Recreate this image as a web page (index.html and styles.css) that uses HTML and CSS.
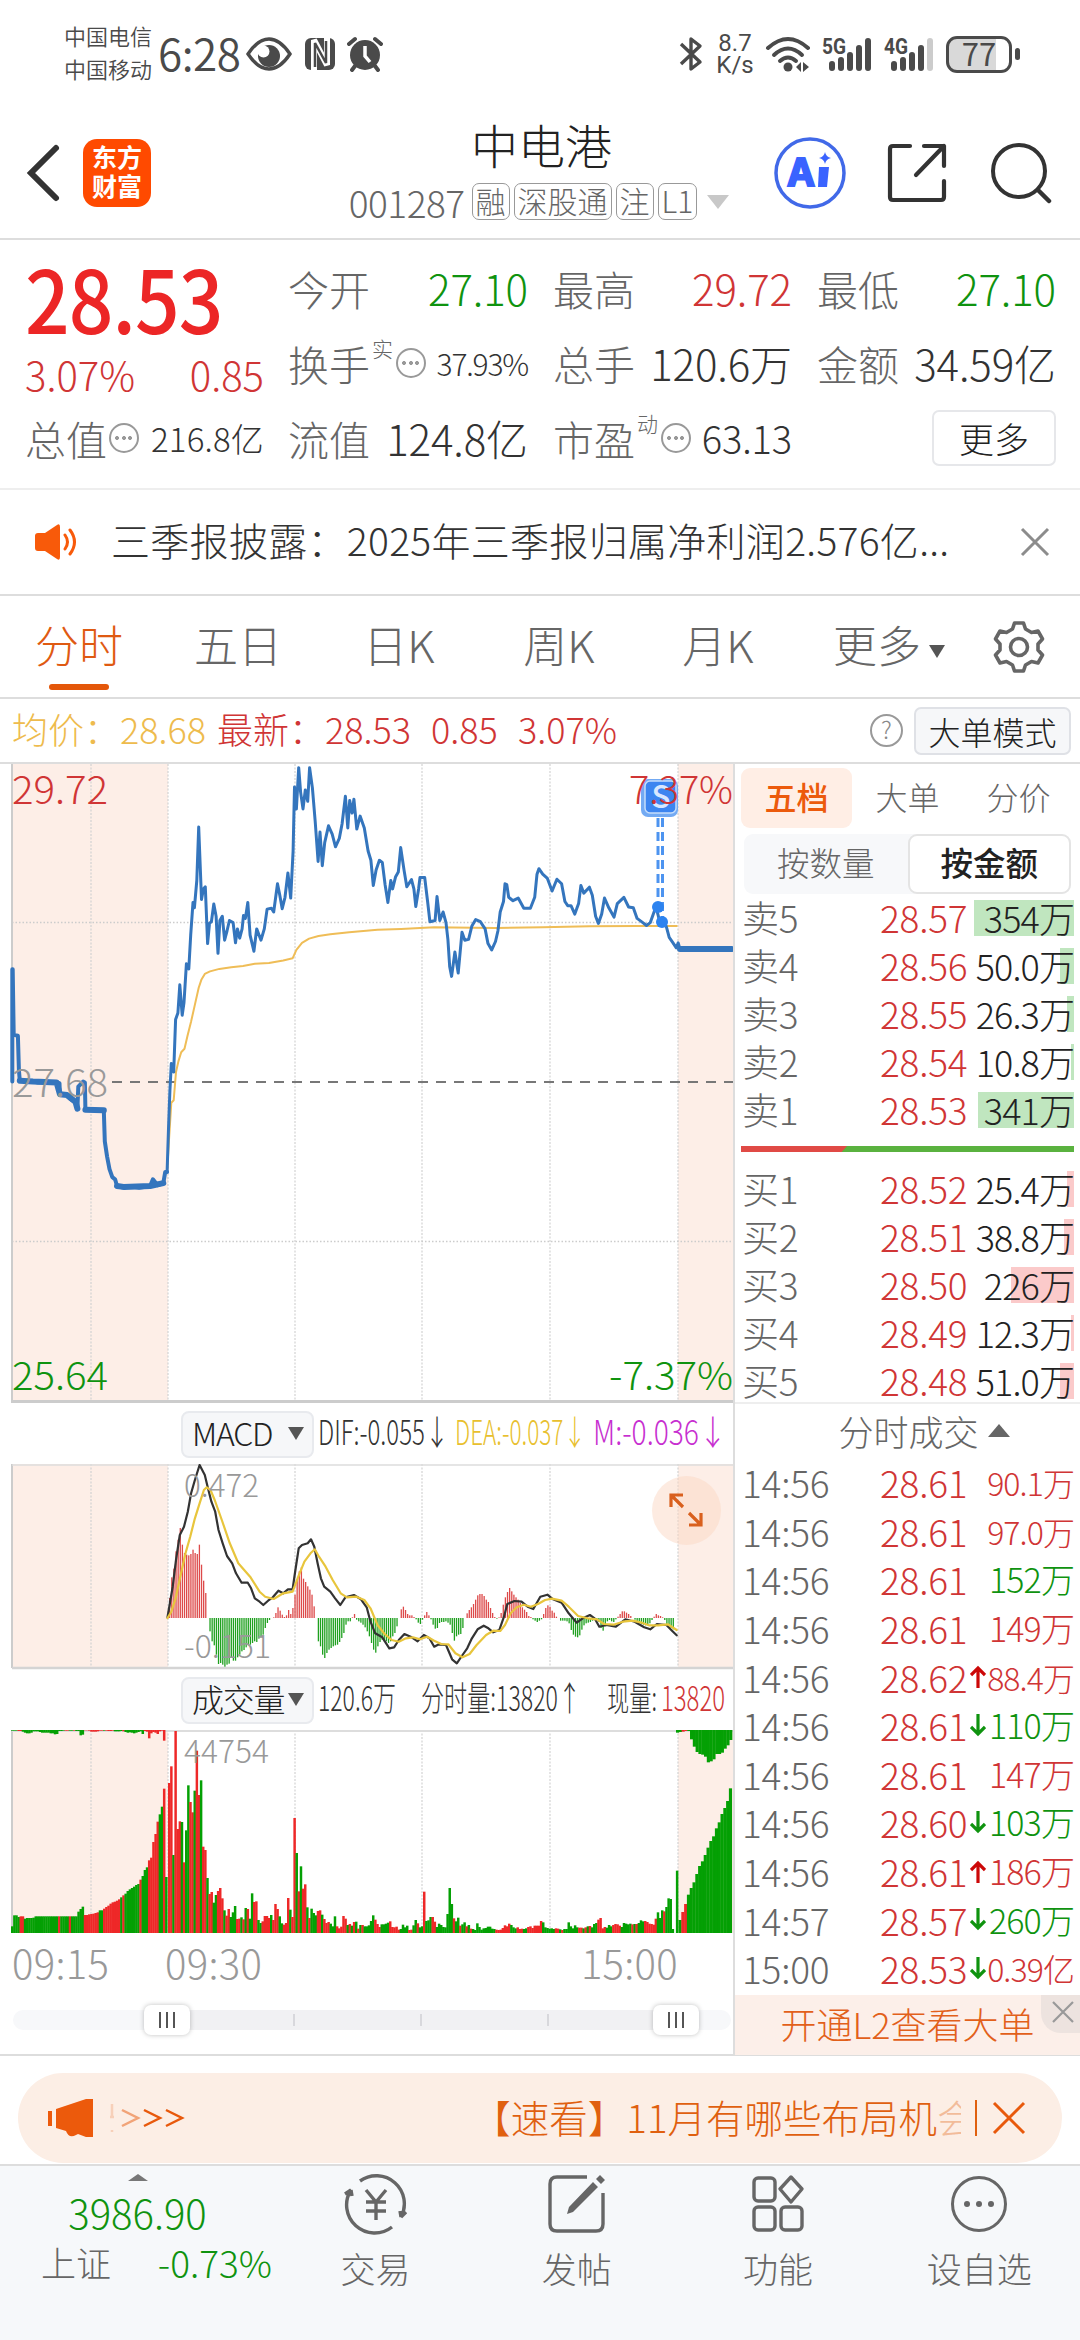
FILE: index.html
```
<!DOCTYPE html>
<html lang="zh-CN">
<head>
    <meta charset="UTF-8">
    <meta name="viewport" content="width=device-width, initial-scale=1.0">
    <title>中电港 001287</title>
    <link rel="stylesheet" href="styles.css">
</head>
<body>
    <div class="status-bar">
        <div class="carrier"><span>中国电信</span><span>中国移动</span></div>
        <span class="clock">6:28</span>
        <svg class="eye" width="46" height="34" viewBox="0 0 46 34"><path d="M2 17Q12 2 23 2T44 17Q34 32 23 32T2 17Z" fill="none" stroke="#4a4a4a" stroke-width="3.4"/><circle cx="23" cy="19" r="11" fill="#4a4a4a"/><circle cx="17.500" cy="14.500" r="6" fill="#fff"/></svg>
        <svg class="nfc" width="32" height="34" viewBox="0 0 32 34"><rect x="1" y="1" width="30" height="32" rx="6" fill="#4a4a4a"/><path d="M10 33V3l13 25V1" fill="none" stroke="#fff" stroke-width="6"/><path d="M11 30V6l11 20V4" fill="none" stroke="#4a4a4a" stroke-width="2.500"/></svg>
        <svg class="alarm" width="36" height="36" viewBox="0 0 36 36"><circle cx="18" cy="19" r="15" fill="#4a4a4a"/><path d="M2 8l6-5M34 8l-6-5M8 30l-3 4M28 30l3 4" stroke="#4a4a4a" stroke-width="4" stroke-linecap="round"/><path d="M18 10v10l5 6" stroke="#fff" stroke-width="3.500" fill="none"/></svg>
        <div class="status-right">
            <svg width="24" height="36" viewBox="0 0 24 36"><path d="M2 8l19 18-9 7V3l9 7L2 28" fill="none" stroke="#4a4a4a" stroke-width="3.400" stroke-linejoin="round"/></svg>
            <div class="speed"><span>8.7</span><span>K/s</span></div>
            <svg width="46" height="36" viewBox="0 0 46 36"><g fill="none" stroke="#4a4a4a" stroke-width="4" stroke-linecap="round"><path d="M3 12Q23-6 43 12"/><path d="M9 19Q23 6 37 19"/><path d="M15 25Q23 18 31 25"/></g><circle cx="23" cy="31" r="4.500" fill="#4a4a4a"/><path d="M31 31l5-5v10ZM38 26l6 5-6 5Z" fill="#4a4a4a"/></svg>
            <svg class="signal" width="52" height="36" viewBox="0 0 52 36"><text x="1" y="18" textLength="24" lengthAdjust="spacingAndGlyphs">5G</text><path d="M11 28v4M20 24v8M29 19v13M38 12v20M47 5v27"/></svg>
            <svg class="signal" width="52" height="36" viewBox="0 0 52 36"><text x="1" y="18" textLength="24" lengthAdjust="spacingAndGlyphs">4G</text><path d="M11 28v4M20 24v8M29 19v13M38 12v20"/><path class="off" d="M47 5v27"/></svg>
            <div class="battery">77</div>
        </div>
    </div>

    <header class="header">
        <svg class="back" width="36" height="60" viewBox="0 0 36 60"><path d="M31 5L6 30l25 25" fill="none" stroke="#333" stroke-width="6" stroke-linecap="round"/></svg>
        <div class="logo">东方<br>财富</div>
        <div class="stock">
            <h1>中电港</h1>
            <div class="code-row">
                <span class="code">001287</span>
                <span class="tag">融</span><span class="tag">深股通</span><span class="tag">注</span><span class="tag">L1</span>
                <i class="caret"></i>
            </div>
        </div>
        <svg class="ai" width="74" height="74" viewBox="0 0 74 74"><circle cx="37" cy="37" r="34" fill="none" stroke="#4169e8" stroke-width="3.500"/><text x="14" y="50" textLength="28" lengthAdjust="spacingAndGlyphs">A</text><path d="M46 31h10l-2 20h-9z" fill="#3a63ff"/><path d="M52 16q1 5 6 6-5 1-6 6-1-5-6-6 5-1 6-6" fill="#3a63ff"/></svg>
        <svg class="share" width="60" height="60" viewBox="0 0 60 60"><path d="M23 3H6q-3 0-3 3v48q0 3 3 3h48q3 0 3-3V38M37 3h20v20M57 3L29 32" fill="none" stroke="#333" stroke-width="4.200" stroke-linecap="round" stroke-linejoin="round"/></svg>
        <svg class="search" width="62" height="62" viewBox="0 0 62 62"><circle cx="29" cy="29" r="26" fill="none" stroke="#333" stroke-width="4"/><path d="M48 48l11 11" stroke="#333" stroke-width="4.500" stroke-linecap="round"/></svg>
    </header>

    <section class="quote">
        <div class="quote-main">
            <div class="price">28.53</div>
            <div class="change"><span>3.07%</span><span>0.85</span></div>
            <div class="cell small"><label>总值</label><i class="dots"></i><b>216.8亿</b></div>
        </div>
        <div class="quote-grid">
            <div class="cell"><label>今开</label><b class="green">27.10</b></div>
            <div class="cell"><label>最高</label><b class="red">29.72</b></div>
            <div class="cell"><label>最低</label><b class="green">27.10</b></div>
            <div class="cell tight"><label>换手<sup>实</sup></label><i class="dots"></i><b>37.93%</b></div>
            <div class="cell"><label>总手</label><b>120.6万</b></div>
            <div class="cell"><label>金额</label><b>34.59亿</b></div>
            <div class="cell"><label>流值</label><b>124.8亿</b></div>
            <div class="cell mid"><label>市盈<sup>动</sup></label><i class="dots"></i><b>63.13</b></div>
            <div class="cell"><button class="more">更多</button></div>
        </div>
    </section>

    <section class="news">
        <svg width="46" height="38" viewBox="0 0 46 38"><path d="M2 13q0-3 3-3h7L24 2q3-2 3 2v30q0 4-3 2l-12-8H5q-3 0-3-3z" fill="#f85a0a"/><path d="M32 12q5 7 0 14M37 7q9 12 0 24" fill="none" stroke="#f85a0a" stroke-width="3" stroke-linecap="round"/></svg>
        <p>三季报披露：2025年三季报归属净利润2.576亿...</p>
        <svg width="30" height="30" viewBox="0 0 30 30"><path d="M2 2l26 26M28 2L2 28" stroke="#8c8c8c" stroke-width="3"/></svg>
    </section>

    <nav class="tabs">
        <a class="active">分时</a><a>五日</a><a>日K</a><a>周K</a><a>月K</a><a>更多<i class="tri"></i></a>
        <svg width="52" height="54" viewBox="-26 -27 52 54"><path d="M-4.500-24h9l2 6 6 3.500 6.500-1.500 4.500 8-4.500 5v6l4.500 5-4.500 8-6.500-1.500-6 3.500-2 6h-9l-2-6-6-3.500-6.500 1.500-4.500-8 4.500-5v-6l-4.500-5 4.500-8 6.500 1.500 6-3.500z" fill="none" stroke="#666" stroke-width="3.600" stroke-linejoin="round"/><circle r="8.500" fill="none" stroke="#666" stroke-width="3.600"/></svg>
    </nav>

    <div class="summary">
        <span class="avg">均价：28.68</span>
        <span class="last">最新：28.53</span><span class="last">0.85</span><span class="last">3.07%</span>
        <i class="help">?</i>
        <button>大单模式</button>
    </div>

    <main class="board">
        <div class="charts">
            <svg id="priceChart" class="chart" width="733" height="640" viewBox="0 0 733 640"></svg>
            <div class="indicator">
                <button>MACD<i class="tri"></i></button>
                <svg width="418" height="50" viewBox="0 0 418 50">
                    <text x="4" y="36" textLength="131" lengthAdjust="spacingAndGlyphs" fill="#333">DIF:-0.055↓</text>
                    <text x="141" y="36" textLength="131" lengthAdjust="spacingAndGlyphs" fill="#e8bf2e">DEA:-0.037↓</text>
                    <text x="279" y="36" textLength="134" lengthAdjust="spacingAndGlyphs" fill="#c72fd0">M:-0.036↓</text>
                </svg>
            </div>
            <div class="panel">
                <svg id="macdChart" class="chart" width="733" height="206" viewBox="0 0 733 206"></svg>
                <div class="expand"><svg width="34" height="34" viewBox="0 0 34 34"><path d="M14 2H2v12M2 2l12 12M20 32h12V20M32 32L20 20" fill="none" stroke="#d9601e" stroke-width="3.200"/></svg></div>
            </div>
            <div class="indicator volume-head">
                <button>成交量<i class="tri"></i></button>
                <svg width="418" height="50" viewBox="0 0 418 50">
                    <text x="4" y="36" textLength="78" lengthAdjust="spacingAndGlyphs" fill="#333">120.6万</text>
                    <text x="107" y="36" textLength="160" lengthAdjust="spacingAndGlyphs" fill="#333">分时量:13820↑</text>
                    <text x="293" y="36" textLength="50" lengthAdjust="spacingAndGlyphs" fill="#333">现量:</text>
                    <text x="347" y="36" textLength="64" lengthAdjust="spacingAndGlyphs" fill="#d03535">13820</text>
                </svg>
            </div>
            <svg id="volChart" class="chart" width="733" height="205" viewBox="0 0 733 205"></svg>
            <div class="times"><span>09:15</span><span>09:30</span><span>15:00</span></div>
            <div class="slider">
                <div class="range"><i></i><i></i><i></i></div>
                <b></b><b class="end"></b>
            </div>
        </div>

        <aside class="book">
            <div class="book-tabs"><span class="active">五档</span><span>大单</span><span>分价</span></div>
            <div class="segment"><span>按数量</span><span class="active">按金额</span></div>
            <div id="asks"></div>
            <div class="ratio"><i></i></div>
            <div id="bids"></div>
            <div class="trades-title">分时成交<i></i></div>
            <div id="trades"></div>
            <div class="l2">开通L2查看大单<span><svg width="22" height="22" viewBox="0 0 22 22"><path d="M1 1l20 20M21 1L1 21" stroke="#999" stroke-width="2.200"/></svg></span></div>
        </aside>
    </main>

    <div class="promo-wrap">
        <div class="promo">
            <svg width="46" height="40" viewBox="0 0 46 40"><path d="M0 13h4v15H0zM8 11L38 1h7v38h-7l-8-3-2 1q-7 4-10-4L8 30z" fill="#ec5a0c"/></svg>
            <svg class="arrows" width="76" height="36" viewBox="0 0 76 36"><path d="M2 4v12M0 17h4M2 30v2" opacity=".2"/><path d="M12 10l16 8-16 8" opacity=".5"/><path d="M34 10l16 8-16 8M56 10l16 8-16 8"/></svg>
            <p>【速看】11月有哪些布局机<em>会</em></p>
            <i></i>
            <svg width="34" height="34" viewBox="0 0 34 34"><path d="M2 2l30 30M32 2L2 32" stroke="#e8590c" stroke-width="3"/></svg>
        </div>
    </div>

    <footer class="bottom-nav">
        <div class="index">
            <i></i>
            <b>3986.90</b>
            <div><span>上证</span><em>-0.73%</em></div>
        </div>
        <a>
            <svg width="68" height="62" viewBox="-34 -31 68 62"><path d="M-16-23A28 28 0 0 1 25 13l5-5M16 23A28 28 0 0 1-25-14l-6 4M25 13l-1-6M-25-14l1 6M-10-14L0-2-10-14M10-14L0-2V16M-10-2h20M-10 7h20" fill="none" stroke="#666" stroke-width="3.400"/></svg>
            <span>交易</span>
        </a>
        <a>
            <svg width="60" height="62" viewBox="0 0 60 62"><path d="M40 4H10q-7 0-7 7v40q0 7 7 7h39q7 0 7-7V20" fill="none" stroke="#666" stroke-width="3.400"/><path d="M46 9l5 5-25 25-6 2 2-7zM49 6l4-4 5 5-4 4z" fill="#666"/></svg>
            <span>发帖</span>
        </a>
        <a>
            <svg width="56" height="62" viewBox="0 0 56 62"><g fill="none" stroke="#666" stroke-width="3.400"><rect x="4" y="5" width="21" height="23" rx="4"/><path d="M41 4l11 12-11 13-11-13z" stroke-linejoin="round"/><rect x="4" y="34" width="21" height="23" rx="4"/><rect x="31" y="34" width="21" height="23" rx="4"/></g></svg>
            <span>功能</span>
        </a>
        <a>
            <svg width="60" height="62" viewBox="0 0 60 62"><circle cx="30" cy="31" r="26.500" fill="none" stroke="#666" stroke-width="3"/><g fill="#666"><circle cx="18" cy="31" r="3"/><circle cx="30" cy="31" r="3"/><circle cx="42" cy="31" r="3"/></g></svg>
            <span>设自选</span>
        </a>
    </footer>

    <script src="chart.js"></script>
</body>
</html>
```
FILE: styles.css
```
* {
    box-sizing: border-box;
}
body {
    margin: 0;
    width: 1080px;
    height: 2340px;
    overflow: hidden;
    background: #fff;
    color: #333;
    font-family: "Noto Sans CJK SC", "Noto Sans", sans-serif;
    font-weight: 300;
}
h1, p {
    margin: 0;
    font-weight: 300;
}
i, em {
    font-style: normal;
}
b {
    font-weight: 300;
}
button {
    font-family: inherit;
    font-weight: 300;
    color: #222;
    padding: 0;
}
svg {
    display: block;
    flex: none;
}
.red { color: #d03535; }
.green { color: #0f930f; }

/* status bar */
.status-bar {
    display: flex;
    align-items: center;
    height: 108px;
    padding-left: 64px;
    color: #4a4a4a;
}
.carrier {
    display: flex;
    flex-direction: column;
    width: 94px;
    margin-top: -5px;
    font-size: 22px;
    line-height: 33px;
    font-weight: 350;
}
.clock {
    width: 88px;
    font-size: 44px;
    line-height: 60px;
    letter-spacing: -0.5px;
    font-weight: 350;
    margin-top: -4px;
}
.nfc { margin-left: 12px; }
.alarm { margin-left: 11px; }
.status-right {
    display: flex;
    align-items: center;
    margin-left: auto;
    margin-right: 68px;
}
.speed {
    display: flex;
    flex-direction: column;
    align-items: center;
    width: 36px;
    margin: 0 12px 0 14px;
    font-family: Roboto, sans-serif;
    font-size: 24px;
    line-height: 22px;
    font-weight: 400;
}
.signal {
    margin-left: 10px;
}
.signal path {
    fill: none;
    stroke: #4a4a4a;
    stroke-width: 6;
    stroke-linecap: round;
}
.signal .off { stroke: #ccc; }
.signal text {
    font: 700 22px Roboto, sans-serif;
    fill: #4a4a4a;
}
.battery {
    position: relative;
    width: 66px;
    height: 37px;
    margin-left: 11px;
    border: 3px solid #4a4a4a;
    border-radius: 11px;
    background: linear-gradient(to right, #d9d9d9 78%, #fff 78%);
    text-align: center;
    font-size: 31px;
    line-height: 28px;
    font-weight: 400;
}
.battery::after {
    content: "";
    position: absolute;
    right: -11px;
    top: 9px;
    width: 5px;
    height: 12px;
    border-radius: 3px;
    background: #4a4a4a;
}

/* header */
.header {
    display: flex;
    align-items: center;
    height: 132px;
    border-bottom: 2px solid #ddd;
}
.back { margin: -1px 22px 0 25px; }
.logo {
    width: 68px;
    height: 68px;
    border-radius: 14px;
    background: #ff4a00;
    color: #fff;
    font-size: 25px;
    line-height: 29px;
    padding-top: 3px;
    text-align: center;
    font-weight: 700;
}
.stock {
    width: 581px;
    padding-left: 200px;
    padding-bottom: 5px;
    text-align: center;
}
.stock h1 {
    font-size: 47px;
    line-height: 62px;
    color: #222;
}
.code-row {
    display: flex;
    align-items: center;
    justify-content: center;
    width: 390px;
    height: 54px;
    margin-left: -7px;
    color: #666;
}
.code {
    font-size: 37px;
    margin-right: 3px;
    letter-spacing: -0.5px;
}
.tag {
    height: 37px;
    margin-left: 4px;
    padding: 0 3px;
    border: 1.5px solid #999;
    border-radius: 7px;
    font-size: 30px;
    line-height: 32px;
}
.caret {
    margin-left: 10px;
    border: 11px solid transparent;
    border-top: 14px solid #c8c8c8;
    border-bottom: 0;
}
.ai { margin-left: 41px; }
.ai text {
    font: 700 38px Inter, sans-serif;
    fill: #3a63ff;
    stroke: #3a63ff;
    stroke-width: 2;
}
.share { margin-left: 40px; }
.search { margin-left: 43px; }

/* quote */
.quote {
    display: flex;
    height: 250px;
    padding: 10px 24px 0 25px;
    border-bottom: 2px solid #eee;
}
.quote-main {
    width: 239px;
    margin-right: 24px;
}
.price {
    height: 93px;
    font-size: 87px;
    line-height: 93px;
    font-weight: 500;
    letter-spacing: -1px;
    color: #ec2626;
    transform: scaleX(0.9);
    transform-origin: left;
}
.change {
    display: flex;
    justify-content: space-between;
    height: 57px;
    font-size: 40px;
    line-height: 62px;
    color: #d03535;
}
.quote-grid {
    display: grid;
    grid-template-columns: 240px 239px 239px;
    grid-auto-rows: 75px;
    column-gap: 25px;
}
.cell {
    display: flex;
    align-items: center;
    height: 75px;
    font-size: 41px;
}
.cell label {
    position: relative;
    color: #666;
    white-space: nowrap;
}
.cell b {
    margin-left: auto;
    font-size: 42px;
    white-space: nowrap;
    letter-spacing: -0.1px;
}
.cell.small b { font-size: 33px; letter-spacing: 0.2px; }
.cell.tight b { font-size: 30px; letter-spacing: -1.2px; }
.cell.mid b { font-size: 38px; }
.cell sup {
    position: absolute;
    left: 84px;
    top: 3px;
    font-size: 21px;
    line-height: 24px;
}
.dots {
    position: relative;
    width: 30px;
    height: 30px;
    margin-left: 2px;
    border: 2.5px solid #999;
    border-radius: 50%;
    background: radial-gradient(circle, #999 1.8px, transparent 2.2px) center / 6px 6px no-repeat,
        radial-gradient(circle, #999 1.8px, transparent 2.2px) 3px center / 6px 6px no-repeat,
        radial-gradient(circle, #999 1.8px, transparent 2.2px) 16px center / 6px 6px no-repeat;
}
.cell label:has(sup) + .dots { margin-left: 26px; }
.more {
    width: 124px;
    height: 56px;
    margin-left: auto;
    border: 2px solid #e6e7ea;
    border-radius: 7px;
    background: #fff;
    font-size: 35px;
    line-height: 46px;
}

/* news */
.news {
    display: flex;
    align-items: center;
    height: 106px;
    padding: 0 30px 0 33px;
    border-bottom: 2px solid #ddd;
}
.news p {
    flex: 1;
    margin: -6px 0 0 32px;
    font-size: 39px;
    line-height: 60px;
    letter-spacing: 0.3px;
    white-space: nowrap;
}

/* tabs */
.tabs {
    display: grid;
    grid-template-columns: 158px 160px 162px 158px 160px 182px 78px;
    align-items: center;
    height: 103px;
    border-bottom: 2px solid #ddd;
    color: #666;
    text-align: center;
}
.tabs svg { margin-left: 13px; }
.tabs a {
    position: relative;
    height: 101px;
    font-size: 44px;
    line-height: 96px;
}
.tabs a.active {
    color: #df5a12;
}
.tabs a.active::after {
    content: "";
    position: absolute;
    left: 49px;
    bottom: 7px;
    width: 60px;
    height: 6px;
    border-radius: 3px;
    background: #e4570a;
}
.tri {
    display: inline-block;
    margin-left: 8px;
    border: 8px solid transparent;
    border-top: 13px solid #555;
    border-bottom: 0;
    vertical-align: middle;
}

/* summary row */
.summary {
    display: flex;
    align-items: center;
    height: 63px;
    padding: 0 9px 0 12px;
    font-size: 36px;
    white-space: nowrap;
}
.summary span {
    line-height: 58px;
    margin-top: -5px;
}
.summary .avg {
    color: #eebb4d;
    margin-right: 11px;
}
.summary .last {
    color: #d03535;
    margin-right: 20px;
}
.help {
    width: 33px;
    height: 33px;
    margin-left: auto;
    border: 2.5px solid #999;
    border-radius: 50%;
    font-size: 24px;
    line-height: 26px;
    text-align: center;
    color: #888;
}
.summary button {
    width: 157px;
    height: 48px;
    margin-left: 11px;
    border: 2px solid #dfe1e6;
    border-radius: 7px;
    background: #f6f7f9;
    font-size: 32px;
    line-height: 38px;
}

/* board */
.board {
    display: flex;
    height: 1294px;
    border-top: 2px solid #ddd;
    border-bottom: 2px solid #ddd;
}
.charts {
    width: 735px;
    border-right: 2px solid #ddd;
}
.chart text {
    font-size: 36px;
}
.panel {
    position: relative;
    height: 206px;
}
.expand {
    position: absolute;
    left: 652px;
    top: 12px;
    width: 69px;
    height: 69px;
    padding: 17px;
    border-radius: 50%;
    background: rgba(252, 215, 195, 0.5);
}
.indicator {
    display: flex;
    align-items: center;
    height: 60px;
    padding-left: 181px;
}
.indicator button {
    display: flex;
    align-items: center;
    justify-content: space-between;
    width: 133px;
    height: 47px;
    padding: 0 8px 0 9px;
    border: 2px solid #e8eaee;
    border-radius: 8px;
    background: #f6f7f9;
    font-size: 32px;
    line-height: 36px;
    padding-bottom: 4px;
    letter-spacing: -1.2px;
    white-space: nowrap;
}
.indicator .tri { margin: 3px 0 0 0; }
.indicator text {
    font-size: 34px;
}
.volume-head { height: 60px; }
.times {
    display: flex;
    padding-left: 12px;
    height: 69px;
    font-size: 40px;
    line-height: 54px;
    color: #999;
}
.times span { letter-spacing: 0.3px; }
.times span:nth-child(2) { margin-left: 56px; }
.times span:nth-child(3) { margin-left: auto; margin-right: 55px; }
.slider {
    position: relative;
    margin: 6px 2px 0 13px;
    height: 20px;
    border-radius: 10px;
    background: #f7f8fa;
}
.range {
    display: flex;
    margin-left: 155px;
    width: 508px;
    height: 20px;
    background: #f1f1f3;
}
.range i {
    width: 127px;
    height: 12px;
    margin-top: 4px;
    border-right: 2px solid #d8d8dc;
}
.slider b {
    position: absolute;
    left: 131px;
    top: -5px;
    width: 46px;
    height: 30px;
    border-radius: 7px;
    background: linear-gradient(#555, #555) 15px 7px / 2px 16px no-repeat,
        linear-gradient(#555, #555) 22px 7px / 2px 16px no-repeat,
        linear-gradient(#555, #555) 29px 7px / 2px 16px no-repeat, #fff;
    box-shadow: 0 0 5px rgba(0, 0, 0, 0.25);
}
.slider b.end { left: 640px; }

/* order book */
.book {
    width: 345px;
    padding-left: 6px;
}
.book-tabs {
    display: flex;
    align-items: center;
    height: 60px;
    margin-top: 4px;
    font-size: 32px;
    color: #666;
}
.book-tabs span {
    width: 111px;
    height: 60px;
    line-height: 56px;
    text-align: center;
    border-radius: 9px;
}
.book-tabs .active {
    background: #ffeee5;
    color: #ec5a0c;
    font-weight: 500;
}
.segment {
    display: flex;
    width: 327px;
    height: 60px;
    margin: 6px 0 0 3px;
    border-radius: 9px;
    background: #f7f8fa;
    font-size: 32.500px;
    color: #666;
    line-height: 56px;
    text-align: center;
}
.segment span { width: 164px; }
.segment .active {
    border: 2px solid #e4e4e4;
    border-radius: 9px;
    background: #fff;
    color: #222;
    font-weight: 500;
    line-height: 52px;
}
.row {
    position: relative;
    display: flex;
    align-items: center;
    height: 48px;
    width: 333px;
    padding-left: 1px;
    font-size: 37px;
    line-height: 44px;
    color: #666;
}
.row span { margin-top: -4px; }
#asks { margin-top: 1px; }
.row span:first-child { width: 138px; letter-spacing: -0.2px; }
.row .px { color: #d03535; letter-spacing: -0.2px; }
.row .amt {
    position: relative;
    margin-left: auto;
    color: #222;
    font-size: 36px;
    letter-spacing: -0.9px;
}
.row .bar {
    position: absolute;
    right: 0;
    top: 5px;
    height: 36px;
}
.bar.ask { background: #c0e6bf; }
.bar.bid { background: #fbcaca; }
.ratio {
    height: 6px;
    width: 333px;
    margin: 11px 0 14px;
    background: #5ab23f;
}
.ratio i {
    display: block;
    width: 106px;
    height: 6px;
    background: #e04a45;
    clip-path: polygon(0 0, 100% 0, 95% 100%, 0 100%);
}
.trades-title {
    display: flex;
    align-items: center;
    justify-content: center;
    height: 58px;
    margin: -4px 0 0 -6px;
    padding: 0 0 4px 33px;
    border-top: 2px solid #eee;
    font-size: 35px;
    color: #666;
}
.trades-title i {
    margin-left: 9px;
    border: 11px solid transparent;
    border-bottom: 13px solid #666;
    border-top: 0;
}
#trades .row { height: 48.600px; }
#trades .amt {
    font-size: 34px;
    line-height: 40px;
}
#trades .long { font-size: 32px; }
.row .arrow {
    position: absolute;
    left: 229px;
    top: 11px;
}
.l2 {
    position: relative;
    height: 60px;
    margin-left: -6px;
    background: #fcefe9;
    color: #e2601a;
    font-size: 36px;
    line-height: 56px;
    text-align: center;
}
.l2 span {
    position: absolute;
    right: 0;
    top: 0;
    width: 39px;
    height: 38px;
    padding: 6px 0 0 11px;
    border-bottom-left-radius: 20px;
    background: #ede3df;
}

/* promo */
.promo-wrap {
    height: 108px;
    padding: 17px 18px 0;
}
.promo {
    display: flex;
    align-items: center;
    height: 90px;
    padding: 0 36px 0 30px;
    border-radius: 45px;
    background: #fceee5;
    color: #e0600f;
}
.arrows {
    margin-left: 16px;
    fill: none;
    stroke: #e8590c;
    stroke-width: 2.5;
}
.promo p {
    margin: -4px 0 0 auto;
    font-size: 38.5px;
    white-space: nowrap;
}
.promo em {
    display: inline-block;
    width: 24px;
    overflow: hidden;
    vertical-align: top;
    opacity: 0.35;
}
.promo > i {
    width: 2px;
    height: 36px;
    margin: 0 15px 0 14px;
    background: #e0600f;
}

/* bottom nav */
.bottom-nav {
    display: flex;
    height: 177px;
    border-top: 2px solid #ddd;
    background: #f6f8fa;
    color: #666;
}
.index {
    width: 275px;
    display: flex;
    flex-direction: column;
    align-items: center;
    color: #0f930f;
}
.index i {
    margin-top: 8px;
    border: 10px solid transparent;
    border-bottom: 7px solid #777;
    border-top: 0;
}
.index b {
    margin-top: 3px;
    font-size: 40px;
    line-height: 56px;
    letter-spacing: 0;
}
.index div {
    display: flex;
    justify-content: space-between;
    width: 275px;
    padding: 0 3px 0 41px;
    font-size: 35px;
    line-height: 44px;
}
.index em {
    font-size: 37px;
    letter-spacing: 0;
}
.index span { color: #666; }
.bottom-nav a {
    width: 201.500px;
    display: flex;
    flex-direction: column;
    align-items: center;
    padding-top: 7px;
    font-size: 35px;
}
.bottom-nav a span {
    margin-top: 10px;
    line-height: 46px;
}
```
FILE: chart.js
```
const BLUE = '#3475bd';
const RED = '#d03535';
const GREEN = '#0f930f';
const GRID_X = [91, 168, 295, 422, 550, 678];

// horizontal unit of the recorded points
const UX = 2.119;
const UY = 2.376;

function rect(x, y, w, h, fill) {
    return `<rect x="${x.toFixed(2)}" y="${y.toFixed(2)}" width="${w}" height="${h.toFixed(2)}" fill="${fill}"/>`;
}

function label(x, y, len, text, fill, size = 36) {
    return `<text x="${x}" y="${y}" textLength="${len}" lengthAdjust="spacingAndGlyphs" fill="${fill}" style="font-size:${size}px">${text}</text>`;
}

function frame(h) {
    let s = rect(12, 0, 156, h, '#fdeee7') + rect(678, 0, 55, h, '#fdeee7');
    GRID_X.forEach(x => {
        s += `<path d="M${x} 0V${h}" stroke="#d2d2d2" stroke-width="1.2" stroke-dasharray="2 1.500"/>`;
    });
    s += `<path d="M12 0V${h}" stroke="#ccc" stroke-width="2"/>`;
    return s;
}

function line(points, ox, oy, ux, uy, color, width) {
    const n = points.trim().split(/[\s,]+/).map(Number);
    let d = '';
    for (let i = 0; i < n.length; i += 2) {
        d += (i ? 'L' : 'M') + (n[i] / ux - ox).toFixed(1) + ' ' + (n[i + 1] / uy - oy).toFixed(1);
    }
    return `<path d="${d}" fill="none" stroke="${color}" stroke-width="${width}" stroke-linejoin="round" stroke-linecap="round"/>`;
}

// price
const auction = `26,788 26,521 27,521 29,677 38,679 40,760 42,786 70,787 80,790 120,790 126,792 127,818 142,820 150,830 160,836 164,852 166,800 176,788 180,790 181,855 220,856 222,930 227,966 232,996 238,1015 244,1020 248,1036 262,1040 275,1036 295,1040 318,1036 324,1020 334,1034 346,1029 350,1003 354,1003`;
const price = `354,1003 357,900 360,810 363,745 368,765 372,640 377,625 381,558 386,630 390,600 395,508 400,520 404,440 409,362 412,375 417,310 421,183 427,355 431,330 435,325 440,460 444,412 448,408 453,366 458,395 462,483 466,405 471,395 476,452 481,430 486,405 494,410 499,458 503,425 508,447 513,425 516,393 520,400 525,362 530,440 538,478 544,425 553,452 560,425 566,378 575,376 580,385 588,318 593,345 598,377 604,350 610,292 616,352 621,240 624,88 628,140 633,42 637,100 642,140 647,95 652,122 656,42 662,90 668,170 674,265 678,195 683,275 688,220 696,180 704,200 711,230 719,210 725,175 732,110 737,185 741,120 746,150 750,117 756,188 763,157 772,185 780,240 786,262 791,322 797,285 804,262 810,267 816,320 822,362 828,310 832,330 838,302 844,290 849,232 856,285 862,325 872,308 877,330 881,372 887,330 890,303 900,303 906,360 911,408 922,405 926,348 932,405 939,385 945,410 949,450 953,515 957,538 964,480 971,530 979,433 985,452 993,450 1000,418 1008,403 1018,408 1028,425 1034,460 1042,475 1050,455 1055,430 1060,385 1067,360 1070,318 1074,320 1078,350 1087,358 1098,352 1110,376 1124,376 1133,350 1138,295 1142,282 1150,295 1160,305 1170,335 1180,307 1190,318 1197,360 1203,370 1210,370 1218,390 1226,365 1231,322 1237,340 1249,326 1255,345 1262,395 1268,412 1275,390 1281,352 1290,375 1301,397 1308,365 1322,350 1332,373 1342,375 1350,400 1362,410 1370,417 1378,410 1390,372 1398,408 1404,400 1412,420 1418,445 1426,458 1433,470 1437,458 1441,473 1552,473`;
const average = `354,1003 358,930 363,838 368,832 373,765 378,740 384,718 391,710 397,680 405,645 413,605 421,565 427,545 434,532 445,526 465,520 490,516 515,513 540,508 570,506 600,500 620,495 628,475 640,458 655,448 675,442 700,438 740,433 800,427 850,425 920,421 960,422 1050,423 1150,421 1250,419 1350,418 1434,418`;
const OY = 14;
let s = frame(639);
s += '<path d="M12 158.500H733M12 477.500H733" stroke="#ccc" stroke-width="1.500" stroke-dasharray="1.500 2"/>';
s += '<path d="M112 318H733" stroke="#777" stroke-width="2" stroke-dasharray="10 8"/>';
s += '<path d="M12 637.500H733" stroke="#ccc" stroke-width="3"/>';
s += line(average, 0, OY, UX, UY, '#efbd57', 2);
s += line(auction, 0, OY, UX, UY, BLUE, 4);
s += line('42,786 70,788 120,790 127,818 142,820 160,836 164,852', 0, OY, UX, UY, BLUE, 6);
s += line('181,855 220,856', 0, OY, UX, UY, BLUE, 6);
s += line('248,1036 262,1038 318,1036 346,1029', 0, OY, UX, UY, BLUE, 6);
s += line(price, 0, OY, UX, UY, BLUE, 3);
s += line('1441,473 1550,473', 0, OY, UX, UY, BLUE, 6);
// sell marker
s += '<path d="M658 54V146M662.500 54V158" stroke="#4d94f0" stroke-width="3" stroke-dasharray="9 5"/>';
s += '<circle cx="658" cy="143" r="6" fill="#2d83ef"/><circle cx="662" cy="158" r="6" fill="#2d83ef"/>';
s += '<rect x="641" y="15" width="37" height="38" rx="7" fill="#73aaf3"/><rect x="645" y="17" width="31" height="32" rx="5" fill="#3d85f0" stroke="#c5ddfb" stroke-width="1.500"/>';
s += '<text x="661" y="44" text-anchor="middle" fill="#d9e8ff" style="font-size:31px;font-weight:500">S</text>';
s += label(12, 40, 96, '29.72', RED, 39) + label(629, 40, 104, '7.37%', RED, 39);
s += label(12, 333, 96, '27.68', '#999', 39) + label(12, 626, 96, '25.64', GREEN, 39) + label(609, 626, 124, '-7.37%', GREEN, 39);
document.getElementById('priceChart').innerHTML = s;

// MACD
const macd = `60 122 148 200 235 270 220 195 190 188 192 205 195 192 220 160 112 75 0 -40 -70 -82 -110 -138 -135 -140 -146 -140 -137 -120 -128 -128 -118 -110 -100 -96 -88 -80 -80 -75 -70 -72 -62 -54 -50 -30 -15 -6 0 2 15 32 22 10 3 8 24 12 30 70 115 140 152 118 108 95 85 70 35 0 -70 -85 -110 -120 -105 -95 -90 -85 -82 -80 -72 -60 -45 -20 -10 -10 2 12 -5 -10 -14 -20 -28 -40 -55 -75 -95 -104 -85 -72 -65 -70 -70 -75 -70 -55 -45 -25 0 26 34 24 12 8 8 3 -4 -14 -18 -5 8 18 8 -4 -20 -32 -30 -15 -12 -12 -10 -14 -20 -45 -68 -55 -50 -48 -30 0 14 24 32 42 55 68 72 72 66 55 48 30 15 3 -2 2 15 40 62 78 90 80 70 62 55 45 32 25 18 6 3 -4 -8 -12 -8 -4 12 30 38 34 22 16 4 0 -8 -8 -8 -10 -16 -36 -50 -56 -58 -52 -35 -22 -16 -14 -12 -8 -4 -6 -12 -30 -38 -25 -10 -6 -10 -12 -4 4 12 20 20 16 12 6 0 -5 -10 -14 -18 -20 -22 -20 -16 -6 4 12 8 6 2 -6 -18 -26 -30 -34`.split(' ').map(Number);
const dif = `355,652 360,610 366,560 373,480 381,405 390,380 398,335 405,280 413,240 423,195 434,225 440,260 448,305 456,335 463,390 472,430 481,468 492,490 500,520 512,548 525,548 532,565 540,595 550,605 558,615 568,602 578,592 590,572 600,580 610,568 620,568 626,510 633,445 640,435 652,430 659,418 666,440 673,490 680,535 687,560 700,575 710,595 721,615 732,592 750,585 765,598 777,622 785,665 795,700 810,712 825,745 835,742 845,720 857,702 870,710 885,724 898,705 910,715 920,740 930,733 945,735 958,778 968,790 980,765 990,745 1000,715 1012,688 1025,677 1035,685 1045,697 1058,690 1068,650 1075,612 1090,603 1105,605 1118,620 1130,627 1145,590 1160,584 1172,598 1190,608 1205,640 1222,668 1235,655 1250,645 1260,655 1270,680 1285,675 1305,680 1325,658 1345,665 1365,682 1378,688 1392,672 1412,675 1424,692 1434,706`;
const dea = `355,654 363,635 372,595 382,530 393,460 403,410 413,355 423,310 432,270 438,262 446,270 455,300 470,360 487,430 505,490 530,530 550,575 562,590 580,597 600,580 620,575 632,530 645,485 658,460 667,448 676,470 690,500 705,540 722,580 735,592 755,590 772,600 785,625 800,675 815,702 830,720 845,725 860,715 875,712 890,718 905,710 920,722 935,732 950,733 965,760 980,772 995,762 1010,735 1030,705 1045,692 1060,693 1070,675 1082,640 1095,622 1110,614 1125,620 1140,612 1155,600 1170,596 1190,602 1205,620 1225,648 1245,655 1265,658 1280,672 1300,674 1320,665 1340,662 1360,668 1375,676 1395,676 1415,673 1434,690`;
s = frame(204);
s += '<path d="M12 1H733" stroke="#ddd" stroke-width="1.500"/><path d="M12 204H733" stroke="#d4d4d4" stroke-width="2.500"/>';
macd.forEach((v, i) => {
    const h = Math.abs(v) / 3;
    s += rect(169 + i * 2.125, v > 0 ? 154 - h : 154, 1.3, h, v > 0 ? '#dd4a4a' : '#1fa01f');
});
s += line(dif, 0, 64, UX, 3, '#333', 2.2) + line(dea, 0, 64, UX, 3, '#e8c53c', 2.2);
s += label(184, 33, 75, '0.472', '#999', 31) + label(184, 194, 87, '-0.151', '#999', 31);
document.getElementById('macdChart').innerHTML = s;

// volume: g = down bar, r = up bar
const before = 'g20 g53 g53 g48 r50 r50 g43 g45 g45 g45 g46 g50 g50 g50 g50 g50 g50 g50 g50 g50 g50 g50 r50 g50 g50 g50 g50 r50 g50 g50 g50 g64 g72 g79 r54 r54 r56 r57 r58 r60 r62 g68 g68 r73 r78 r82 r88 r92 r94 r97 r101 g107 r113 g118 g126 g131 g135 g139 g144 g147 r160 g171 g189 g197 r218 r226 r273 r297 r334 g356 g379 r433 g168';
const session = 'r450 r500 g234 r606 r312 r335 g333 r212 g308 g443 r393 r362 g427 r547 r414 g458 r259 r249 g165 r117 r123 g91 g114 r126 r135 r104 g68 r52 r72 g48 g62 g81 r42 r43 g47 r41 g75 r72 g43 g119 r93 r95 g39 g30 r35 r51 r51 r45 g54 r39 r87 r72 g50 g29 r25 r30 r105 g70 r48 r345 g240 r125 g200 r133 r146 g77 r45 g73 g60 g53 r66 r68 g55 r42 r30 r33 g28 g20 g50 r20 r14 r19 r51 r43 g24 r27 g22 r33 g34 r13 g24 '
    + 'r24 g20 g20 g23 g36 g53 r40 r27 r18 g26 g26 g28 g31 r35 r18 r17 r19 r10 g12 g25 g17 g22 r9 r10 g23 g39 r29 g17 g20 r124 g36 g38 g48 r48 r34 g18 g28 g24 g18 g17 g57 g135 g87 r44 g35 g46 r22 g26 g32 r20 g24 r13 g12 g9 g29 g18 g10 g14 g15 g19 g19 g13 g12 r10 r9 r10 r15 r23 r20 r28 g24 g17 g14 r17 r12 r13 g12 g14 r18 r20 r15 r22 r22 r22 r36 g32 g17 g15 g13 g14 g12 r14 r13 g11 r9 g12 g12 g32 g20 g14 g23 g17 r16 r16 g14 r17 g20 r21 g17 g27 g30 r40 r45 r14 r18 g16 g24 g20 r24 r27 r26 r22 g18 g30 g28 g26 g28 r26 g27 r27 g30 g38 g35 r36 r33 r28 r27 r25 r43 g62 g45 g68 r65 g78 g104 g102 g12 g0 g187';
const after = 'g39 r63 r87 g115 g135 g152 g177 g201 g215 g234 g256 g276 g290 g314 g332 g357 g375 g396 g434';
const hangBefore = 'g2 g2 g2 r3 r3 g5 g8 g10 g10 g8 g4 g4 g4 g6 g8 g8 g8 g8 g10 g10 g13 g12 g3 g3 g2 r2 r2 g2 g2 r2 g3 g3 g16 g14 r1 r1 r2 r5 r5 r5 r4 r2 r2 g2 r2 r3 r3 r2 g4 g4 g4 g3 r4 g6 g8 g7 g8 g10 g8 g6 g4 g12 r3 r5 r25 r10 r6 r8 r12 r4 r2 r32';
const hangAfter = 'g8 g6 r5 r3 g3 g28 g50 g66 g72 g74 g80 g97 g94 g88 g72 g72 g68 g56 g46 g30';

function bars(data, x0, step, top) {
    return data.split(' ').map((d, i) => {
        const h = d.slice(1) / 3;
        return rect(x0 + i * step, top ? 0 : 203 - h, step + 0.35, h, d[0] === 'r' ? '#ee2828' : '#04a004');
    }).join('');
}

s = frame(203) + '<path d="M12 1H733" stroke="#ddd" stroke-width="2"/>';
s += bars(before, 11, 2.14) + bars(session, 168, 2.125) + bars(after, 678.5, 2.8);
s += bars(hangBefore, 11, 2.14, true) + bars(hangAfter, 676, 2.8, true);
s += label(184, 33, 85, '44754', '#999', 31);
document.getElementById('volChart').innerHTML = s;

// order book: name, price, amount, bar width
const asks = [
    ['卖5', '28.57', '354万', 100],
    ['卖4', '28.56', '50.0万', 14],
    ['卖3', '28.55', '26.3万', 7],
    ['卖2', '28.54', '10.8万', 3],
    ['卖1', '28.53', '341万', 96]
];
const bids = [
    ['买1', '28.52', '25.4万', 7],
    ['买2', '28.51', '38.8万', 10],
    ['买3', '28.50', '226万', 63],
    ['买4', '28.49', '12.3万', 3],
    ['买5', '28.48', '51.0万', 14]
];

function fillBook(id, rows, type) {
    document.getElementById(id).innerHTML = rows.map(r => `
        <div class="row">
            <span>${r[0]}</span><span class="px">${r[1]}</span>
            <i class="bar ${type}" style="width:${r[3]}px"></i>
            <span class="amt">${r[2]}</span>
        </div>`).join('');
}
fillBook('asks', asks, 'ask');
fillBook('bids', bids, 'bid');

// time, price, amount, amount color, arrow
const trades = [
    ['14:56', '28.61', '90.1万', 'red', ''],
    ['14:56', '28.61', '97.0万', 'red', ''],
    ['14:56', '28.61', '152万', 'green', ''],
    ['14:56', '28.61', '149万', 'red', ''],
    ['14:56', '28.62', '88.4万', 'red', 'up'],
    ['14:56', '28.61', '110万', 'green', 'down'],
    ['14:56', '28.61', '147万', 'red', ''],
    ['14:56', '28.60', '103万', 'green', 'down'],
    ['14:56', '28.61', '186万', 'red', 'up'],
    ['14:57', '28.57', '260万', 'green', 'down'],
    ['15:00', '28.53', '0.39亿', 'red', 'down']
];
const arrows = {
    '': '',
    up: '<svg class="arrow" width="16" height="23" viewBox="0 0 16 23"><path d="M8 23V3M1 10l7-7 7 7" fill="none" stroke="#cc0808" stroke-width="3.200"/></svg>',
    down: '<svg class="arrow" width="16" height="23" viewBox="0 0 16 23"><path d="M8 0v20M1 13l7 7 7-7" fill="none" stroke="#0f930f" stroke-width="3.200"/></svg>'
};
document.getElementById('trades').innerHTML = trades.map(t => `
    <div class="row">
        <span>${t[0]}</span><span class="px">${t[1]}</span>${arrows[t[4]]}
        <span class="amt ${t[2].includes('.') ? 'long' : ''}" style="color:${t[3] === 'red' ? RED : GREEN}">${t[2]}</span>
    </div>`).join('');
```
